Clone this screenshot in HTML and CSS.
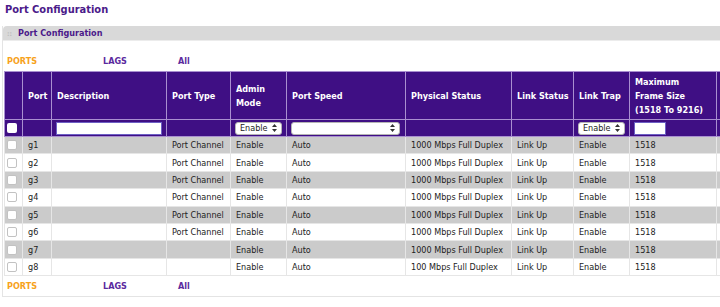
FILE: index.html
```html
<!DOCTYPE html>
<html lang="en">
<head>
    <meta charset="UTF-8">
    <title>Port Configuration</title>
    <link rel="stylesheet" href="styles.css">
</head>
<body>
    <h1 class="page-title">Port Configuration</h1>

    <div class="panel">
        <div class="panel-head"><span class="grip">::</span>Port Configuration</div>

        <div class="tabs">
            <a class="tab active" href="#">PORTS</a>
            <a class="tab lags" href="#">LAGS</a>
            <a class="tab" href="#">All</a>
        </div>

        <div class="table-wrap">
            <table class="ports">
                <colgroup>
                    <col class="c-check">
                    <col class="c-port">
                    <col class="c-desc">
                    <col class="c-type">
                    <col class="c-admin">
                    <col class="c-speed">
                    <col class="c-phys">
                    <col class="c-link">
                    <col class="c-trap">
                    <col class="c-frame">
                    <col class="c-more">
                </colgroup>
                <thead>
                    <tr class="head-row">
                        <th></th>
                        <th>Port</th>
                        <th>Description</th>
                        <th>Port Type</th>
                        <th>Admin<br>Mode</th>
                        <th>Port Speed</th>
                        <th>Physical Status</th>
                        <th>Link Status</th>
                        <th>Link Trap</th>
                        <th>Maximum<br>Frame Size<br>(1518 To 9216)</th>
                        <th></th>
                    </tr>
                    <tr class="filter-row">
                        <th><span class="box"></span></th>
                        <th></th>
                        <th><span class="text-in desc-in"></span></th>
                        <th></th>
                        <th><span class="select sel-short">Enable<svg width="5" height="8" viewBox="0 0 5 8"><path d="M2.5 0 L5 3 L0 3 Z M2.5 8 L5 5 L0 5 Z" fill="#333"/></svg></span></th>
                        <th><span class="select sel-long"><svg width="5" height="8" viewBox="0 0 5 8"><path d="M2.5 0 L5 3 L0 3 Z M2.5 8 L5 5 L0 5 Z" fill="#333"/></svg></span></th>
                        <th></th>
                        <th></th>
                        <th><span class="select sel-short">Enable<svg width="5" height="8" viewBox="0 0 5 8"><path d="M2.5 0 L5 3 L0 3 Z M2.5 8 L5 5 L0 5 Z" fill="#333"/></svg></span></th>
                        <th><span class="text-in frame-in"></span></th>
                        <th></th>
                    </tr>
                </thead>
                <tbody>
                    <tr><td><span class="row-box"></span></td><td>g1</td><td></td><td>Port Channel</td><td>Enable</td><td>Auto</td><td>1000 Mbps Full Duplex</td><td>Link Up</td><td>Enable</td><td>1518</td><td></td></tr>
                    <tr><td><span class="row-box"></span></td><td>g2</td><td></td><td>Port Channel</td><td>Enable</td><td>Auto</td><td>1000 Mbps Full Duplex</td><td>Link Up</td><td>Enable</td><td>1518</td><td></td></tr>
                    <tr><td><span class="row-box"></span></td><td>g3</td><td></td><td>Port Channel</td><td>Enable</td><td>Auto</td><td>1000 Mbps Full Duplex</td><td>Link Up</td><td>Enable</td><td>1518</td><td></td></tr>
                    <tr><td><span class="row-box"></span></td><td>g4</td><td></td><td>Port Channel</td><td>Enable</td><td>Auto</td><td>1000 Mbps Full Duplex</td><td>Link Up</td><td>Enable</td><td>1518</td><td></td></tr>
                    <tr><td><span class="row-box"></span></td><td>g5</td><td></td><td>Port Channel</td><td>Enable</td><td>Auto</td><td>1000 Mbps Full Duplex</td><td>Link Up</td><td>Enable</td><td>1518</td><td></td></tr>
                    <tr><td><span class="row-box"></span></td><td>g6</td><td></td><td>Port Channel</td><td>Enable</td><td>Auto</td><td>1000 Mbps Full Duplex</td><td>Link Up</td><td>Enable</td><td>1518</td><td></td></tr>
                    <tr><td><span class="row-box"></span></td><td>g7</td><td></td><td></td><td>Enable</td><td>Auto</td><td>1000 Mbps Full Duplex</td><td>Link Up</td><td>Enable</td><td>1518</td><td></td></tr>
                    <tr><td><span class="row-box"></span></td><td>g8</td><td></td><td></td><td>Enable</td><td>Auto</td><td>100 Mbps Full Duplex</td><td>Link Up</td><td>Enable</td><td>1518</td><td></td></tr>
                </tbody>
            </table>
        </div>

        <div class="tabs tabs-bottom">
            <a class="tab active" href="#">PORTS</a>
            <a class="tab lags" href="#">LAGS</a>
            <a class="tab" href="#">All</a>
        </div>
    </div>
</body>
</html>
```

FILE: styles.css
```css
body {
    margin: 0;
    font-family: "DejaVu Sans Condensed", "DejaVu Sans", sans-serif;
    font-stretch: condensed;
    font-size: 9px;
    color: #222;
    background: #fff;
    overflow: hidden;
}

.page-title {
    margin: 0;
    padding: 3px 0 0 5px;
    height: 23px;
    box-sizing: border-box;
    font-size: 11px;
    line-height: 13px;
    color: #4b1a8a;
}

.panel {
    margin: 3px 0 0 2px;
    border-left: 1px solid #e4e4e4;
    border-bottom: 1px solid #e4e4e4;
    overflow: hidden;
}

.panel-head {
    height: 14px;
    background: #d9d9d9;
    border-top-left-radius: 4px;
    border-bottom: 1px solid #ececec;
    font-size: 9px;
    font-weight: bold;
    line-height: 14px;
    color: #4b1a8a;
    padding-left: 4px;
}

.grip {
    display: inline-block;
    width: 11px;
    color: #bdbdbd;
    font-size: 7px;
}

.tabs {
    display: flex;
    padding: 14px 0 4px 4px;
    line-height: 12px;
}

.tabs-bottom {
    padding-top: 4px;
    padding-bottom: 4px;
}

.tab {
    width: 75px;
    font-weight: bold;
    font-size: 9px;
    color: #5b2a9e;
    text-decoration: none;
}

.tab.active {
    width: 96px;
    color: #f7a21b;
}

.table-wrap {
    margin-left: 1px;
    overflow: hidden;
}

.ports {
    border-collapse: collapse;
    table-layout: fixed;
    width: 772px;
}

.c-check { width: 18px; }
.c-port { width: 29px; }
.c-desc { width: 115px; }
.c-type { width: 64px; }
.c-admin { width: 56px; }
.c-speed { width: 119px; }
.c-phys { width: 106px; }
.c-link { width: 62px; }
.c-trap { width: 56px; }
.c-frame { width: 87px; }
.c-more { width: 60px; }

.ports th {
    background: #3f0f84;
    color: #fff;
    font-weight: bold;
    text-align: left;
    padding: 0 5px;
    border: 1px solid #a98fd0;
    line-height: 14px;
    white-space: nowrap;
}

.head-row th {
    height: 47px;
}

.filter-row th {
    height: 16px;
    padding: 0 4px;
}

.filter-row th:first-child {
    padding: 0 2px;
}

.ports td {
    height: 16.4px;
    padding: 0 5px;
    border: 1px solid #e6e6e6;
    white-space: nowrap;
    line-height: 12px;
}

.ports tbody tr:nth-child(odd) td {
    background: #cbcbcb;
}

.ports td:first-child {
    padding: 0 2px;
}

.box,
.row-box {
    display: block;
    width: 10px;
    height: 10px;
    box-sizing: border-box;
    background: #fff;
    border-radius: 2px;
}

.row-box {
    border: 1px solid #c2c2c2;
}

.text-in {
    display: block;
    height: 13px;
    box-sizing: border-box;
    background: #fff;
    border: 1px solid #6d5fc4;
}

.desc-in { width: 106px; }
.frame-in { width: 32px; }

.select {
    display: flex;
    align-items: center;
    justify-content: space-between;
    height: 13px;
    box-sizing: border-box;
    background: #fff;
    border: 1px solid #b5b5b5;
    border-radius: 3px;
    padding: 0 4px 0 4px;
    color: #222;
    font-weight: normal;
    font-size: 9px;
    line-height: 11px;
}

.sel-short { width: 47px; }
.sel-long { width: 109px; justify-content: flex-end; }
```
